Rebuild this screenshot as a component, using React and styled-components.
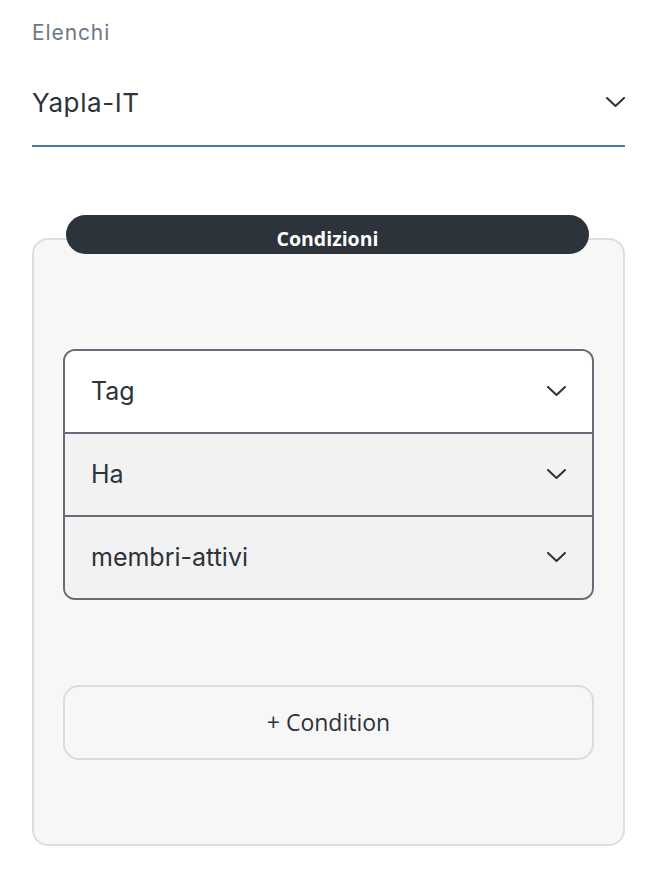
import React from "react";
import styled, { createGlobalStyle } from "styled-components";

const GlobalStyle = createGlobalStyle`
  html, body {
    margin: 0;
    padding: 0;
    background: #ffffff;
  }
  body {
    font-family: "Inter", "Noto Sans", sans-serif;
    color: #2c333b;
  }
`;

const Page = styled.div`
  width: 658px;
  padding: 20px 33px 0 32px;
  box-sizing: border-box;
`;

const Label = styled.div`
  font-size: 21px;
  line-height: 26px;
  letter-spacing: 0.9px;
  color: #6f7784;
`;

const SelectField = styled.div`
  display: flex;
  align-items: center;
  justify-content: space-between;
  height: 64px;
  margin-top: 24px;
  padding-bottom: 11px;
  border-bottom: 2px solid #4a78b4;
  box-sizing: content-box;
`;

const SelectValue = styled.span`
  font-size: 26px;
  letter-spacing: 0.6px;
  color: #2c333b;
`;

const Chevron = ({ className }) => (
  <svg className={className} width="19" height="10" viewBox="0 0 19 10" fill="none">
    <path d="M1 1l8.5 8L18 1" stroke="#2c333b" strokeWidth="2" strokeLinecap="round" strokeLinejoin="round" />
  </svg>
);

const Section = styled.section`
  position: relative;
  margin-top: 91px;
`;

const Pill = styled.div`
  position: absolute;
  top: -23px;
  left: 34px;
  right: 36px;
  height: 39px;
  border-radius: 20px;
  background: #2c333b;
  color: #ffffff;
  font-family: "Open Sans", "Noto Sans", sans-serif;
  font-weight: 700;
  font-size: 19.5px;
  line-height: 26px;
  display: flex;
  align-items: flex-end;
  justify-content: center;
  padding-bottom: 2px;
  box-sizing: border-box;
`;

const Card = styled.div`
  border: 2px solid #dedede;
  border-radius: 16px;
  background: #f7f7f7;
  padding: 109px 29px 84px 29px;
  height: 608px;
  box-sizing: border-box;
  display: flex;
  flex-direction: column;
  gap: 85px;
`;

const Group = styled.div`
  border: 2px solid #656d78;
  border-radius: 12px;
  overflow: hidden;
  display: flex;
  flex-direction: column;
`;

const Row = styled.div`
  display: flex;
  align-items: center;
  justify-content: space-between;
  height: 82px;
  padding: 0 26px 0 26px;
  background: ${(p) => (p.$active ? "#ffffff" : "#f2f2f2")};
  & + & {
    border-top: 2px solid #656d78;
  }
`;

const RowText = styled.span`
  font-size: 25px;
  color: #2c333b;
`;

const AddButton = styled.button`
  height: 76px;
  border: 2px solid #dcdcdc;
  border-radius: 16px;
  background: #f7f7f7;
  font-family: "Open Sans", "Noto Sans", sans-serif;
  font-size: 23px;
  color: #2c333b;
  cursor: pointer;
`;

const rows = [
  { label: "Tag", active: true },
  { label: "Ha" },
  { label: "membri-attivi" },
];

export default function App() {
  return (
    <>
      <GlobalStyle />
      <Page>
        <Label>Elenchi</Label>
        <SelectField>
          <SelectValue>Yapla-IT</SelectValue>
          <Chevron />
        </SelectField>
        <Section>
          <Card>
            <Group>
              {rows.map((r) => (
                <Row key={r.label} $active={r.active}>
                  <RowText>{r.label}</RowText>
                  <Chevron />
                </Row>
              ))}
            </Group>
            <AddButton>+ Condition</AddButton>
          </Card>
          <Pill>Condizioni</Pill>
        </Section>
      </Page>
    </>
  );
}
